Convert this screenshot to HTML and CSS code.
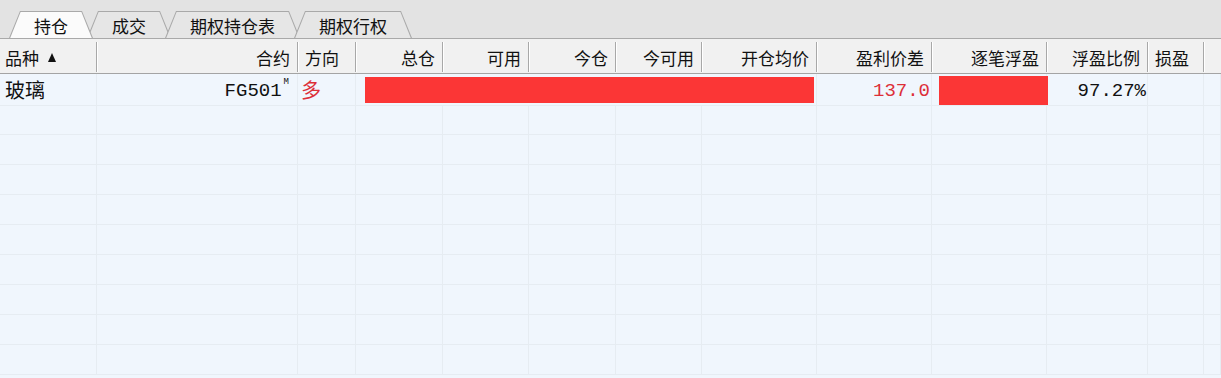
FILE: index.html
```html
<!DOCTYPE html>
<html lang="zh-CN">
<head>
    <meta charset="UTF-8">
    <title>持仓</title>
    <link rel="stylesheet" href="styles.css">
</head>
<body>

    <!-- Tabs -->
    <div class="tabbar">
        <div class="tab active"><span>持仓</span></div>
        <div class="tab"><span>成交</span></div>
        <div class="tab"><span>期权持仓表</span></div>
        <div class="tab"><span>期权行权</span></div>
    </div>

    <!-- Grid header -->
    <div class="row head">
        <div class="cell left first">品种<i class="sort"></i></div>
        <div class="cell">合约</div>
        <div class="cell left">方向</div>
        <div class="cell">总仓</div>
        <div class="cell">可用</div>
        <div class="cell">今仓</div>
        <div class="cell">今可用</div>
        <div class="cell">开仓均价</div>
        <div class="cell">盈利价差</div>
        <div class="cell">逐笔浮盈</div>
        <div class="cell">浮盈比例</div>
        <div class="cell left">损盈</div>
        <div class="cell last"></div>
    </div>

    <!-- Grid body -->
    <div class="body">
        <div class="row data tall">
            <div class="cell left first cjk">玻璃</div>
            <div class="cell num code">FG501<sup>M</sup></div>
            <div class="cell left cjk red dir">多</div>
            <div class="cell span5"><div class="mask mask-a"></div></div>
            <div class="cell num red">137.0</div>
            <div class="cell"><div class="mask mask-b"></div></div>
            <div class="cell num">97.27%</div>
            <div class="cell"></div>
            <div class="cell"></div>
        </div>
        <div class="row data empty"></div>
        <div class="row data empty"></div>
        <div class="row data empty"></div>
        <div class="row data empty"></div>
        <div class="row data empty"></div>
        <div class="row data empty"></div>
        <div class="row data empty"></div>
        <div class="row data empty"></div>
        <div class="row data empty"></div>
    </div>

    <script>
        // empty rows still need their grid cells
        document.querySelectorAll(".row.empty").forEach((row) => {
            for (let i = 0; i < 13; i++) {
                let c = document.createElement("div");
                c.className = "cell";
                row.appendChild(c);
            }
        });
    </script>

</body>
</html>
```

FILE: styles.css
```css
body {
    margin: 0;
    padding: 0;
    background-color: #f0f6fd;
    font-family: "Noto Sans CJK SC", "Noto Sans", sans-serif;
    color: #111111;
    overflow: hidden;
}

/* Tabs */
.tabbar {
    height: 38px;
    background-color: #e3e3e3;
    border-bottom: 1px solid #a9a9a9;
    display: flex;
    align-items: flex-end;
    padding-left: 9px;
}

.tab {
    position: relative;
    height: 27px;
    padding: 0 25px;
    margin-left: -6px;
    display: flex;
    align-items: center;
    font-size: 17px;
    background-color: #a9a9a9;
    clip-path: polygon(0 100%, 11px 0, calc(100% - 11px) 0, 100% 100%);
}

.tab:first-child {
    margin-left: 0;
}

.tab::before {
    content: "";
    position: absolute;
    top: 1px;
    left: 0;
    right: 0;
    bottom: 0;
    background-color: #e6e6e6;
    clip-path: polygon(1.2px 100%, 11.6px 0, calc(100% - 11.6px) 0, calc(100% - 1.2px) 100%);
}

.tab span {
    position: relative;
    line-height: 1;
    margin-top: 1px;
}

.tab.active {
    z-index: 2;
}

.tab.active::before {
    background-color: #fbfbfb;
}

/* Grid */
.row {
    display: grid;
    grid-template-columns: 97px 201px 58px 87px 86px 87px 86px 115px 115px 115px 101px 56px 1fr;
}

.cell {
    box-sizing: border-box;
    display: flex;
    align-items: center;
    justify-content: flex-end;
    white-space: nowrap;
    min-width: 0;
}

.cell.left {
    justify-content: flex-start;
}

.head {
    height: 35px;
    box-sizing: border-box;
    padding: 3px 0 1px;
    background-color: #f1f1f1;
    border-bottom: 1px solid #a4a4a4;
    font-size: 17px;
}

.head .cell {
    padding: 0 7px;
    border-right: 1px solid #a8a8a8;
    box-shadow: inset 1px 0 #ffffff;
}

.head .cell.first {
    padding-left: 5px;
    box-shadow: none;
}

.head .cell.last {
    border-right: none;
}

.sort {
    display: inline-block;
    width: 0;
    height: 0;
    margin-left: 9px;
    border-left: 4.5px solid transparent;
    border-right: 4.5px solid transparent;
    border-bottom: 9px solid #111111;
}

.data {
    height: 30px;
    background-color: #f0f6fd;
}

.data.tall {
    height: 31px;
}

.data .cell {
    border-right: 1px solid #e6ecf2;
    border-bottom: 1px solid #e6ecf2;
    font-family: "Liberation Mono", "Noto Sans CJK SC", monospace;
    font-size: 19px;
    padding: 2px 1px 0;
}

.data .cell.cjk {
    font-family: "Noto Sans CJK SC", sans-serif;
    font-size: 20px;
    padding: 0 0 0 5px;
}

.data .cell.dir {
    padding-left: 3px;
}

.data .cell.code {
    padding-right: 8px;
}

.code sup {
    align-self: flex-start;
    font-size: 9px;
    line-height: 1;
    margin: 2px 0 0 2px;
}

.red {
    color: #dd2f38;
}

.span5 {
    grid-column: span 5;
}

.data .cell.span5 {
    padding: 0;
    justify-content: flex-start;
}

.mask {
    background-color: #fb3636;
}

.mask-a {
    width: 449px;
    height: 26px;
    margin: 1px 0 0 9px;
}

.mask-b {
    width: 109px;
    height: 29px;
    margin: 2px -2px 0 0;
}

.data .cell:has(.mask-b) {
    padding: 0;
    justify-content: flex-end;
    overflow: visible;
}
```
